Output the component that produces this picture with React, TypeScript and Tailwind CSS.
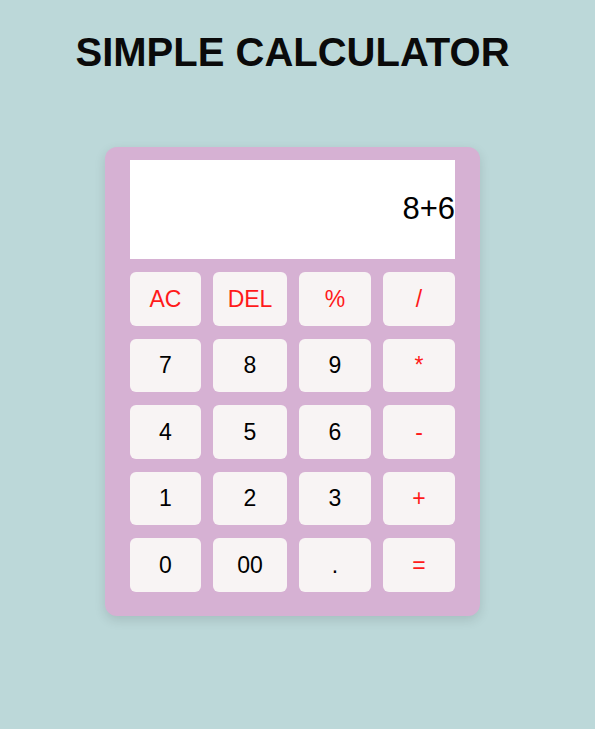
const keys: { label: string; op?: boolean }[] = [
  { label: "AC", op: true },
  { label: "DEL", op: true },
  { label: "%", op: true },
  { label: "/", op: true },
  { label: "7" },
  { label: "8" },
  { label: "9" },
  { label: "*", op: true },
  { label: "4" },
  { label: "5" },
  { label: "6" },
  { label: "-", op: true },
  { label: "1" },
  { label: "2" },
  { label: "3" },
  { label: "+", op: true },
  { label: "0" },
  { label: "00" },
  { label: "." },
  { label: "=", op: true },
];

export default function App() {
  return (
    <main className="min-h-[729px] bg-[#bcd8d9] font-['Liberation_Sans',Arial,sans-serif]">
      <div className="w-[585px] flex flex-col items-center pt-[32px]">
        <h1 className="text-[40px] leading-none font-bold text-[#0a0a0a]">SIMPLE CALCULATOR</h1>

        <div className="mt-[75px] w-[375px] rounded-[12px] bg-[#d6b1d3] px-[25px] pt-[13px] pb-[24px] shadow-[0_4px_12px_rgba(0,0,0,0.12)]">
          <div className="h-[99px] bg-white flex items-center justify-end">
            <span className="text-[31px] text-black">8+6</span>
          </div>
          <div className="mt-[13px] grid grid-cols-[71px_74px_72px_72px] auto-rows-[53.5px] gap-x-[12px] gap-y-[13px]">
            {keys.map((k) => (
              <button
                key={k.label}
                className={`rounded-[6px] bg-[#f8f4f4] text-[23px] flex items-center justify-center ${
                  k.op ? "text-[#ff1a1a]" : "text-black"
                }`}
              >
                {k.label}
              </button>
            ))}
          </div>
        </div>
      </div>
    </main>
  );
}
